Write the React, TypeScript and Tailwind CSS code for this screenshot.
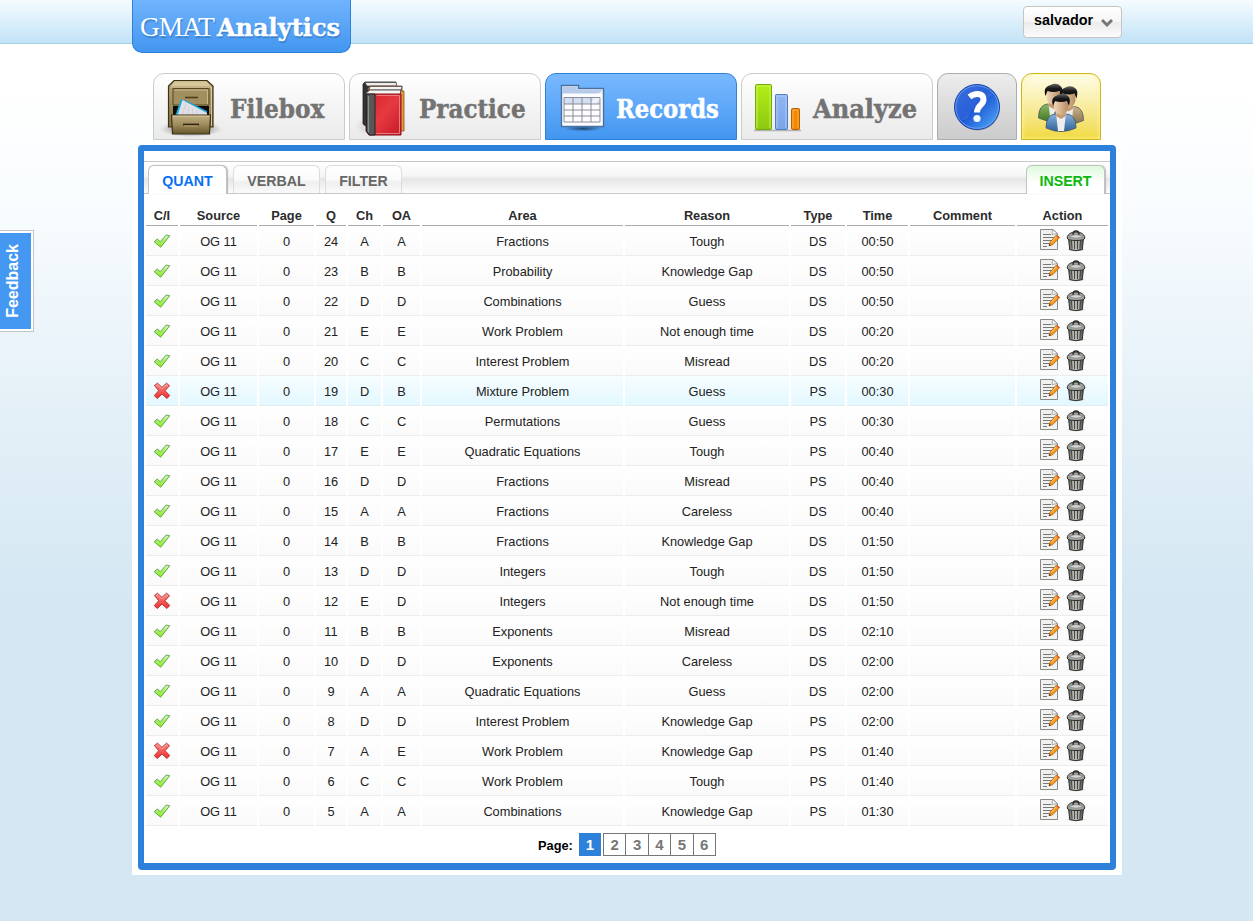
import React from "react";

type Row = [boolean, number, string, string, string, string, string, string];

const rows: Row[] = [
  [true, 24, "A", "A", "Fractions", "Tough", "DS", "00:50"],
  [true, 23, "B", "B", "Probability", "Knowledge Gap", "DS", "00:50"],
  [true, 22, "D", "D", "Combinations", "Guess", "DS", "00:50"],
  [true, 21, "E", "E", "Work Problem", "Not enough time", "DS", "00:20"],
  [true, 20, "C", "C", "Interest Problem", "Misread", "DS", "00:20"],
  [false, 19, "D", "B", "Mixture Problem", "Guess", "PS", "00:30"],
  [true, 18, "C", "C", "Permutations", "Guess", "PS", "00:30"],
  [true, 17, "E", "E", "Quadratic Equations", "Tough", "PS", "00:40"],
  [true, 16, "D", "D", "Fractions", "Misread", "PS", "00:40"],
  [true, 15, "A", "A", "Fractions", "Careless", "DS", "00:40"],
  [true, 14, "B", "B", "Fractions", "Knowledge Gap", "DS", "01:50"],
  [true, 13, "D", "D", "Integers", "Tough", "DS", "01:50"],
  [false, 12, "E", "D", "Integers", "Not enough time", "DS", "01:50"],
  [true, 11, "B", "B", "Exponents", "Misread", "DS", "02:10"],
  [true, 10, "D", "D", "Exponents", "Careless", "DS", "02:00"],
  [true, 9, "A", "A", "Quadratic Equations", "Guess", "DS", "02:00"],
  [true, 8, "D", "D", "Interest Problem", "Knowledge Gap", "PS", "02:00"],
  [false, 7, "A", "E", "Work Problem", "Knowledge Gap", "PS", "01:40"],
  [true, 6, "C", "C", "Work Problem", "Tough", "PS", "01:40"],
  [true, 5, "A", "A", "Combinations", "Knowledge Gap", "PS", "01:30"],
];

const headers = ["C/I", "Source", "Page", "Q", "Ch", "OA", "Area", "Reason", "Type", "Time", "Comment", "Action"];

const GRID =
  "grid grid-cols-[32px_77px_55px_30px_33px_37px_201px_164px_54px_61px_105px_91px] gap-x-[2px] ml-[2px]";

function Gradients() {
  return (
    <svg width="0" height="0" className="absolute" aria-hidden="true">
      <defs>
        <linearGradient id="wood" x1="0" y1="0" x2="0" y2="1">
          <stop offset="0" stopColor="#b9a67a" />
          <stop offset="1" stopColor="#857347" />
        </linearGradient>
        <linearGradient id="drawer" x1="0" y1="0" x2="0" y2="1">
          <stop offset="0" stopColor="#c0af82" />
          <stop offset=".5" stopColor="#a08d5e" />
          <stop offset="1" stopColor="#655529" />
        </linearGradient>
        <linearGradient id="red" x1="0" y1="0" x2="1" y2="1">
          <stop offset="0" stopColor="#d5222c" />
          <stop offset=".5" stopColor="#e63a42" />
          <stop offset="1" stopColor="#c71825" />
        </linearGradient>
        <linearGradient id="lime" x1="0" y1="0" x2="0" y2="1">
          <stop offset="0" stopColor="#b4ee15" />
          <stop offset="1" stopColor="#8cc812" />
        </linearGradient>
        <linearGradient id="sky" x1="0" y1="0" x2="0" y2="1">
          <stop offset="0" stopColor="#92b5f2" />
          <stop offset="1" stopColor="#7aa4e8" />
        </linearGradient>
        <linearGradient id="help" x1="0" y1="0" x2="1" y2="1">
          <stop offset="0" stopColor="#2b63d6" />
          <stop offset=".45" stopColor="#1850cf" />
          <stop offset="1" stopColor="#55b2ff" />
        </linearGradient>
        <linearGradient id="hair" x1="0" y1="0" x2="0" y2="1">
          <stop offset="0" stopColor="#666" />
          <stop offset=".4" stopColor="#181818" />
          <stop offset="1" stopColor="#050505" />
        </linearGradient>
        <linearGradient id="skin" x1="0" y1="0" x2="1" y2="0">
          <stop offset="0" stopColor="#f0d7b8" />
          <stop offset="1" stopColor="#b68c62" />
        </linearGradient>
        <linearGradient id="blueShirt" x1="0" y1="0" x2="0" y2="1">
          <stop offset="0" stopColor="#86b2dc" />
          <stop offset="1" stopColor="#306198" />
        </linearGradient>
        <linearGradient id="greenShirt" x1="0" y1="0" x2="0" y2="1">
          <stop offset="0" stopColor="#8eb868" />
          <stop offset="1" stopColor="#3e7a20" />
        </linearGradient>
        <linearGradient id="tanShirt" x1="0" y1="0" x2="0" y2="1">
          <stop offset="0" stopColor="#c9b48c" />
          <stop offset="1" stopColor="#88704a" />
        </linearGradient>
        <linearGradient id="tick" x1="0" y1="0" x2="0" y2="1">
          <stop offset="0" stopColor="#e4f8d4" />
          <stop offset=".5" stopColor="#a4ec64" />
          <stop offset="1" stopColor="#8fee20" />
        </linearGradient>
        <linearGradient id="cross" x1="0" y1="0" x2="0" y2="1">
          <stop offset="0" stopColor="#f98b88" />
          <stop offset="1" stopColor="#ee3030" />
        </linearGradient>
        <linearGradient id="can" x1="0" y1="0" x2="1" y2="0">
          <stop offset="0" stopColor="#5c5e5a" />
          <stop offset=".4" stopColor="#c0c0bd" />
          <stop offset="1" stopColor="#50524e" />
        </linearGradient>
        <radialGradient id="shade">
          <stop offset="0" stopColor="#000" stopOpacity=".55" />
          <stop offset="1" stopColor="#000" stopOpacity="0" />
        </radialGradient>
      </defs>
    </svg>
  );
}

function CabinetIcon() {
  return (
    <svg width="62" height="60" viewBox="0 0 62 60" className="block">
      <ellipse cx="31" cy="50" rx="31" ry="8" fill="url(#shade)" />
      <path d="M14 1.500H47L53 7V48H8.500V7Z" fill="url(#wood)" stroke="#3c3218" strokeWidth="1.200" />
      <path d="M15 2.500H46L51 7H11Z" fill="#d8c79c" />
      <path d="M10.500 8H51.500V47" fill="none" stroke="#d8c79c" strokeWidth="1" />
      <path d="M13 9.500H49V26H13Z" fill="#a28f60" stroke="#574822" />
      <path d="M14.500 11H47.500V25" fill="none" stroke="#c9b88b" />
      <path d="M25 18.500H38" stroke="#4c3f20" strokeWidth="1.600" />
      <path d="M13 27H49V38H13Z" fill="#0c0b08" />
      <path d="M15 37L21 20L29 23L47 32V37Z" fill="#1ea3db" />
      <path d="M17 38L22.500 21L47 34V38Z" fill="#dfe0e6" />
      <path d="M22 37L26 25M27 37L29 28M32 37L33 29M37 37V31" stroke="#cfd1d8" />
      <path d="M11.500 36H50.500L49.500 55H12.500Z" fill="url(#drawer)" stroke="#3c3218" strokeWidth="1.200" />
      <path d="M12.500 37.200H49.500" stroke="#d8c79c" />
      <path d="M23 45.500H39" stroke="#30270f" strokeWidth="1.800" />
      <path d="M24 46.900H38" stroke="#c9b88b" strokeWidth=".7" />
    </svg>
  );
}

function BooksIcon() {
  return (
    <svg width="52" height="60" viewBox="0 0 52 60" className="block">
      <ellipse cx="26" cy="46" rx="26" ry="11" fill="url(#shade)" opacity=".45" />
      <path d="M8 4L10 2H41V40H14L12 47L8 44Z" fill="#313334" stroke="#222" strokeWidth=".8" />
      <path d="M10 2.500H41L42 6H12Z" fill="#eee" stroke="#444" strokeWidth=".7" />
      <path d="M13 8L16 6H47V50H14Z" fill="#d76c29" stroke="#754126" strokeWidth=".8" />
      <path d="M15 6.500H47L46 10H14Z" fill="#f4f4f2" stroke="#444" strokeWidth=".7" />
      <path d="M45 11H49V51H44Z" fill="#e89b38" stroke="#8a5222" strokeWidth=".8" />
      <path d="M11 13L15 10H46L45 15H12Z" fill="#f5f5f3" stroke="#333" strokeWidth=".8" />
      <path d="M12 14H46V55H14L11 51Z" fill="url(#red)" stroke="#8d101a" />
      <path d="M11.500 14H20V55H14L11.500 51Z" fill="#555857" stroke="#252626" />
      <path d="M13.500 16V52" stroke="#8b8e8b" strokeWidth="1.200" />
      <path d="M21.500 15.500H44.500V53.500H21.500" fill="none" stroke="#ef8387" strokeWidth=".9" />
    </svg>
  );
}

function RecordsIcon() {
  return (
    <svg width="46" height="48" viewBox="0 0 46 48" className="block">
      <ellipse cx="23" cy="44.500" rx="19" ry="3" fill="url(#shade)" />
      <path d="M1.500 1.500H18.500V4.500H43.500V42.500H1.500Z" fill="#fdfdff" stroke="#47729f" strokeWidth="1.400" />
      <path d="M2.500 2.500H17.500V5.500H42.500V9.500H2.500Z" fill="#b6caea" />
      <path d="M4 14H40V20H4Z" fill="#d4dff3" />
      <path d="M22 27L42 6V13L30 26Z" fill="#fff" opacity=".6" />
      <path d="M4 13.500H40V38H4ZM4 20H40M4 26H40M4 32H40M13 13.500V38M22 13.500V38M31 13.500V38" fill="none" stroke="#7f8290" strokeWidth=".9" />
    </svg>
  );
}

function ChartIcon() {
  return (
    <svg width="50" height="50" viewBox="0 0 50 50" className="block">
      <path d="M0 47.500H47" stroke="#777" strokeOpacity=".5" strokeWidth="1.500" />
      <rect x="1.500" y="1.500" width="16" height="45" rx="1" fill="url(#lime)" stroke="#75a80b" />
      <path d="M3 45V3H16V45" fill="none" stroke="#cdf660" strokeWidth=".9" />
      <rect x="21.500" y="11.500" width="12" height="35" rx="1" fill="url(#sky)" stroke="#517cc0" />
      <path d="M23 45V13H32V45" fill="none" stroke="#b4cdf7" strokeWidth=".9" />
      <rect x="37.500" y="25.500" width="8" height="21" rx="1" fill="#f08800" stroke="#b85f05" />
      <path d="M39 45V27H44V45" fill="none" stroke="#ffb54b" strokeWidth=".9" />
    </svg>
  );
}

function HelpIcon() {
  return (
    <svg width="48" height="48" viewBox="0 0 48 48" className="block">
      <circle cx="24.500" cy="25" r="22.500" fill="#555" opacity=".4" />
      <circle cx="24" cy="24" r="22.500" fill="url(#help)" stroke="#1745a5" />
      <circle cx="24" cy="24" r="21.300" fill="none" stroke="#78a7f5" strokeWidth=".8" />
      <path d="M2.500 25A21.500 21.500 0 0 1 40 10C37 17 20 18 15 35Q9 40 5 33Z" fill="#80aaff" opacity=".18" />
      <path d="M16.500 14Q20.500 10.800 25 11Q30.500 11.500 30.500 16.500C30.500 22.500 24 22 24 29.500" fill="none" stroke="#fff" strokeWidth="6" />
      <circle cx="24" cy="35.500" r="3.600" fill="#f3f7ff" />
    </svg>
  );
}

function Person({ x, y, shirt }: { x: number; y: number; shirt: string }) {
  return (
    <g transform={`translate(${x} ${y})`}>
      <path d="M-15 34Q-15 21 -6 20H6Q15 21 15 34Q0 41 -15 34Z" fill={`url(#${shirt})`} stroke="#465462" strokeWidth=".8" />
      <path d="M-5 19H5L3 37H-3Z" fill="#eee" />
      <path d="M-4 17H4L5 22L0 25L-5 22Z" fill="#c49c72" />
      <path d="M-7 8Q0 5 7 8V14Q6 20 0 21Q-6 20 -7 14Z" fill="url(#skin)" />
      <path d="M-8 12Q-11 3 -3 1Q3 -2 7 2Q10 4 8 12L6 7Q0 9 -6 7Z" fill="url(#hair)" />
    </g>
  );
}

function PeopleIcon() {
  return (
    <svg width="48" height="50" viewBox="0 0 48 50" className="block">
      <Person x={16.5} y={1} shirt="greenShirt" />
      <Person x={31.5} y={3.5} shirt="tanShirt" />
      <Person x={24} y={11} shirt="blueShirt" />
    </svg>
  );
}

function Tick() {
  return (
    <svg width="18" height="16" viewBox="0 0 18 16">
      <path d="M1.200 8.800L4.200 6L7.200 8.700L13.200 2L16.700 2.800L7.700 14.200Z" fill="url(#tick)" stroke="#52a038" strokeWidth=".9" strokeLinejoin="round" />
    </svg>
  );
}

function Cross() {
  return (
    <svg width="18" height="18" viewBox="0 0 18 18">
      <path d="M1.500 3.500L4.500 1.200L9 5.400L13.500 1.200L16.500 3.700L12 8.700L16.700 13.500L14 16.500L9 12L4.300 16.500L1.300 13.700L5.700 8.700Z" fill="url(#cross)" stroke="#bc3030" strokeLinejoin="round" />
      <path d="M3 4L4.500 2.500L9 6.800L13.500 2.500L15 4" fill="none" stroke="#ffb0aa" strokeWidth=".8" />
    </svg>
  );
}

function EditIcon() {
  return (
    <svg width="22" height="22" viewBox="0 0 22 22">
      <path d="M1.500 .5H14L18.500 4.500V20.500H1.500Z" fill="#f1f1ef" stroke="#888a85" />
      <path d="M13.500 .5L13 5.500L18.500 4.500Z" fill="#fafafa" stroke="#888" strokeWidth=".7" />
      <path d="M4 5.500H12M4 8.500H15M4 11.500H14M4 14.500H11M4 17.500H8" stroke="#777" strokeWidth="1.200" />
      <path d="M10 16.800L11.300 12.800L17.500 6L20.600 8.500L13.800 15.600Z" fill="#f89a20" stroke="#a85b10" strokeWidth=".8" />
      <path d="M12 13.300L18 6.900" stroke="#ffd070" strokeWidth="1" />
      <path d="M16.800 6.800L17.700 6L20.600 8.500L19.600 9.500Z" fill="#de5b38" />
      <path d="M10 16.800L10.600 14.900L11.900 16.200Z" fill="#222" />
    </svg>
  );
}

function TrashIcon() {
  return (
    <svg width="20" height="22" viewBox="0 0 20 22" className="mt-px">
      <ellipse cx="10" cy="19.500" rx="9.500" ry="2" fill="url(#shade)" />
      <path d="M2.500 8H17.500L16.300 19.500Q10 22 3.700 19.500Z" fill="url(#can)" stroke="#2f312d" />
      <path d="M5.500 11L6.200 18.500M8.500 11V19M11.500 11V19M14.500 11L13.800 18.500" stroke="#454743" strokeWidth="1.200" />
      <path d="M7 11L7.300 19M10 11V19.500M13 11L12.700 19" stroke="#d0d0cc" strokeWidth=".8" />
      <path d="M1.200 8C1.200 4.500 5 2 10 2S18.800 4.500 18.800 8Q18.500 10.500 10 10.500T1.200 8Z" fill="#a2a49f" stroke="#2b2d29" />
      <path d="M3 6.800Q10 2.500 17 6.800Q10 9.800 3 6.800Z" fill="#d6d7d1" stroke="#777" strokeWidth=".6" />
      <path d="M7 4.700Q7 1 10 1T13 4.700" fill="none" stroke="#2b2d29" strokeWidth="1.500" />
    </svg>
  );
}

const serifBold = "block origin-left whitespace-nowrap font-['DejaVu_Serif',serif] font-bold";

function NavTab({
  label, icon, iconBox, squeeze, active = false,
}: { label: string; icon: React.ReactNode; iconBox: string; squeeze: string; active?: boolean }) {
  return (
    <a
      className={`flex h-[67px] w-[192px] items-start rounded-t-[11px] border ${
        active
          ? "border-[#2d81da] bg-linear-to-b from-[#79b9ff] to-[#4296f0] text-white"
          : "border-[#cbcbcb] bg-linear-to-b from-white to-[#eaeaea] text-[#737373]"
      }`}
    >
      <span className={`block shrink-0 ${iconBox}`}>{icon}</span>
      <span className={`mt-[17px] w-0 text-[25.5px] leading-[36px] [-webkit-text-stroke:0.5px_currentColor] ${serifBold} ${squeeze}`}>{label}</span>
    </a>
  );
}

function PanelTab({ label, className }: { label: string; className: string }) {
  return (
    <a className={`block rounded-t-[6px] border border-b-0 text-center text-[14.2px] font-bold leading-[31px] ${className}`}>
      {label}
    </a>
  );
}

export default function App() {
  return (
    <div className="relative h-[921px] w-[1253px] overflow-hidden bg-[linear-gradient(to_bottom,#fff_90px,#f8fcfe_210px,#e6f1f8_390px,#d4e7f2_600px)] font-['Liberation_Sans',Arial,sans-serif] text-[12.8px] text-[#222]">
      <Gradients />
      <header className="h-[44px] border-b border-[#a5cfe4] bg-linear-to-b from-[#f5fbfe] to-[#c2e3f7]">
        <div className="ml-[132px] flex w-[990px] items-start justify-between">
          <a className="flex h-[53px] w-[219px] rounded-b-[10px] border border-t-0 border-[#2d81da] bg-linear-to-b from-[#70b3fd] to-[#4296f0] pl-[7px] pt-[9px] leading-[36px] text-white [text-shadow:1px_2px_1px_#3a80cc]">
            <span className="block w-[77px] shrink-0 font-['Liberation_Serif',serif] text-[27.5px] tracking-[-1px]">GMAT</span>
            <span className={`w-0 scale-x-[.96] pt-px text-[25px] [-webkit-text-stroke:0.4px_currentColor] ${serifBold}`}>Analytics</span>
          </a>
          <button className="mt-[6px] flex h-[32px] w-[99px] items-center justify-between rounded-[4px] border border-[#c5c5c5] bg-[linear-gradient(to_bottom,#fff,#f6f6f6_48%,#ececec_52%,#fbfbfb)] pb-[2px] pl-[10px] pr-[8px] text-[14.4px] font-bold text-black">
            salvador
            <svg width="12" height="10" viewBox="0 0 12 10" className="mt-[3px]">
              <path d="M1 2L6 7L11 2" fill="none" stroke="#777" strokeWidth="3" />
            </svg>
          </button>
        </div>
      </header>

      <main className="ml-[132px] h-[831px] w-[990px] bg-[linear-gradient(to_bottom,transparent_85px,#fff_120px)]">
        <nav className="flex gap-[4px] pl-[21px] pt-[29px]">
          <NavTab label="Filebox" icon={<CabinetIcon />} iconBox="ml-[6px] mt-[5px] w-[70px]" squeeze="scale-x-[.91]" />
          <NavTab label="Practice" icon={<BooksIcon />} iconBox="ml-[5px] mt-[6px] w-[64px]" squeeze="scale-x-[.904]" />
          <NavTab label="Records" icon={<RecordsIcon />} iconBox="ml-[14px] mt-[10px] w-[56px]" squeeze="scale-x-[.889]" active />
          <NavTab label="Analyze" icon={<ChartIcon />} iconBox="ml-[12px] mt-[9px] w-[59px]" squeeze="scale-x-[.945]" />
          <a className="flex h-[67px] w-[80px] justify-center rounded-t-[11px] border border-[#acacac] bg-linear-to-b from-[#ededed] to-[#cbcbcb] pt-[9px]"><HelpIcon /></a>
          <a className="flex h-[67px] w-[80px] justify-center rounded-t-[11px] border border-[#cfb51e] bg-linear-to-b from-[#fffde8] to-[#f1d938] pt-[9px] shadow-[inset_0_0_5px_#fff6a0]"><PeopleIcon /></a>
        </nav>

        <section className="ml-[6px] mt-[5px] h-[725px] w-[978px] rounded-[4px] border-[6px] border-b-[7px] border-[#2d81da] bg-white">
          <div className="mt-[10px] flex h-[33px] items-end border-y border-[#c7c7c7] bg-[linear-gradient(to_bottom,#fff,#f5f5f5_45%,#e6e6e6_55%,#fcfcfc)]">
            <PanelTab label="QUANT" className="mb-[-1px] ml-[4px] h-[29px] w-[79px] border-[#c2c2c2] bg-white text-[#0571f5] shadow-[1px_0_1px_#bbb]" />
            <PanelTab label="VERBAL" className="ml-[6px] h-[28px] w-[87px] border-[#dcdcdc] bg-[linear-gradient(to_bottom,#fff,#fafafa_50%,#efefef_60%,#fafafa)] text-[#666]" />
            <PanelTab label="FILTER" className="ml-[5px] h-[28px] w-[77px] border-[#dcdcdc] bg-[linear-gradient(to_bottom,#fff,#fafafa_50%,#efefef_60%,#fafafa)] text-[#666]" />
            <PanelTab label="INSERT" className="mb-[-1px] ml-auto mr-[5px] h-[29px] w-[79px] border-[#c2c2c2] bg-linear-to-b from-[#ddfadb] to-white to-60% text-[#0cb80c] shadow-[1px_0_1px_#bbb]" />
          </div>

          <div className={`${GRID} mt-[11px] h-[21px] text-center font-bold leading-[21px] text-[#2b2b2b]`}>
            {headers.map((h) => (
              <div key={h} className="h-[21px] border-b border-[#ababab]">{h}</div>
            ))}
          </div>

          {rows.map(([ok, q, ch, oa, area, reason, type, time], i) => {
            const cell = `h-[30px] border-b ${
              i === 5
                ? "border-[#e4eef1] bg-linear-to-b from-[#f7fdff] to-[#e2f8ff]"
                : "border-[#ececec] bg-linear-to-b from-white to-[#fafafa]"
            }`;
            return (
              <div key={q} className={`${GRID} text-center leading-[31px]`}>
                <div className={`${cell} flex items-center justify-center`}>{ok ? <Tick /> : <Cross />}</div>
                <div className={cell}>OG 11</div>
                <div className={cell}>0</div>
                <div className={cell}>{q}</div>
                <div className={cell}>{ch}</div>
                <div className={cell}>{oa}</div>
                <div className={cell}>{area}</div>
                <div className={cell}>{reason}</div>
                <div className={cell}>{type}</div>
                <div className={cell}>{time}</div>
                <div className={cell} />
                <div className={`${cell} flex items-start justify-center gap-[5px] pt-[3px]`}>
                  <EditIcon />
                  <TrashIcon />
                </div>
              </div>
            );
          })}

          <div className="ml-[394px] mt-[7px] flex h-[23px] items-center font-bold">
            <span className="mt-[2px] w-[41px] text-black">Page:</span>
            <span className="mr-[2px] block h-[23px] w-[22px] bg-[#2d81da] text-center text-[15px] leading-[24px] text-white">1</span>
            {["2", "3", "4", "5", "6"].map((n) => (
              <span key={n} className="mr-[-1px] block h-[23px] w-[23.4px] border border-[#777] text-center text-[15px] leading-[22px] text-[#777]">{n}</span>
            ))}
          </div>
        </section>
      </main>

      <aside className="absolute left-0 top-[230px] flex h-[102px] w-[34px] border border-l-0 border-[#c4c4c4] bg-white py-[2px] pr-[2px]">
        <div className="flex w-[31px] items-center justify-center bg-[#4598f1] pr-[5px]">
          <span className="rotate-180 text-[16px] font-bold leading-[18px] text-white [writing-mode:vertical-rl]">Feedback</span>
        </div>
      </aside>
    </div>
  );
}
